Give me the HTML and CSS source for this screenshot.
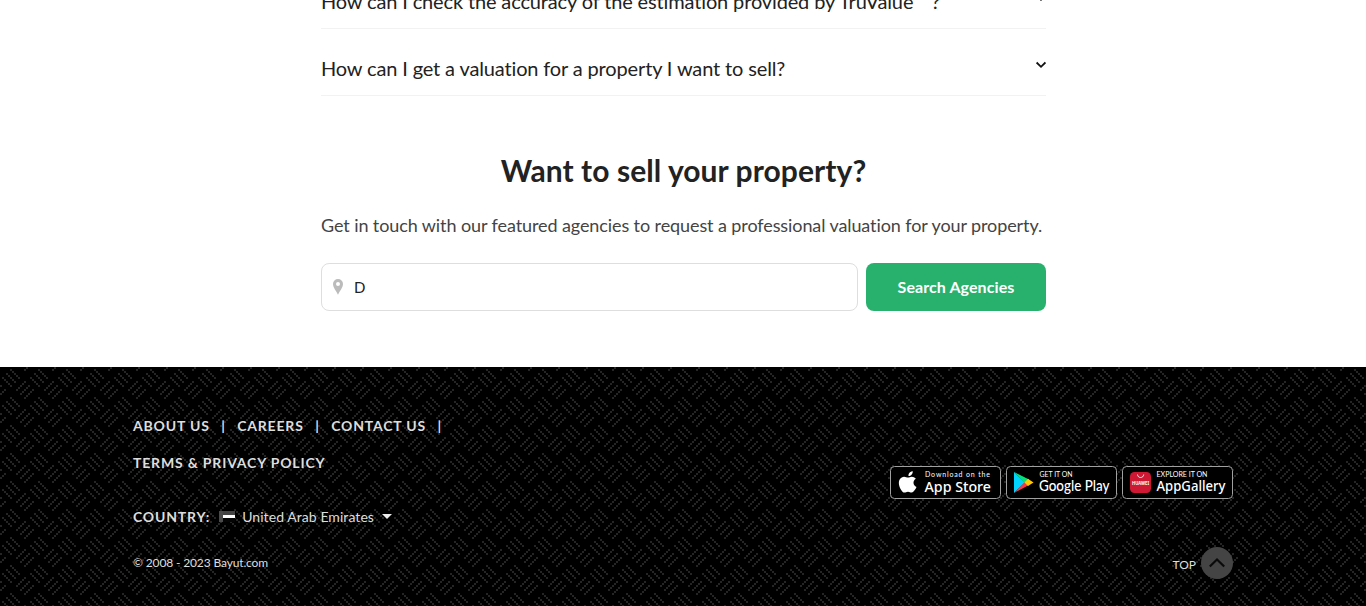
FILE: index.html
```html
<!DOCTYPE html>
<html lang="en">
<head>
<meta charset="utf-8">
<title>Bayut TruValue</title>
<link rel="stylesheet" href="styles.css">
</head>
<body>
<main class="content">
  <section class="faq">
    <div class="faq-row faq-first"><span class="faq-q">How can I check the accuracy of the estimation provided by TruValue<span class="tm">™</span>?</span>
      <svg class="chevron" viewBox="0 0 12 8"><path d="M1.600 1.500 6 5.800l4.400-4.300"/></svg></div>
    <div class="faq-row"><span class="faq-q">How can I get a valuation for a property I want to sell?</span>
      <svg class="chevron" viewBox="0 0 12 8"><path d="M1.600 1.500 6 5.800l4.400-4.300"/></svg></div>
  </section>
  <section class="sell">
    <h2 class="sell-title">Want to sell your property?</h2>
    <p class="sell-text">Get in touch with our featured agencies to request a professional valuation for your property.</p>
    <form class="search">
      <label class="field">
        <svg class="pin" viewBox="0 0 10 16"><path fill-rule="evenodd" d="M5 0a5 5 0 0 0-5 5c0 3.600 3.500 7.200 5 10.800C6.500 12.200 10 8.600 10 5a5 5 0 0 0-5-5zm0 3a2 2 0 1 1 0 4 2 2 0 0 1 0-4z"/></svg>
        <span class="value">D</span>
      </label>
      <button class="search-btn" type="button">Search Agencies</button>
    </form>
  </section>
</main>
<footer class="footer">
  <svg class="weave" aria-hidden="true">
    <defs><pattern id="weave" width="28" height="28" patternUnits="userSpaceOnUse">
      <g fill="#252525" shape-rendering="crispEdges">
        <path d="M6 6h2v2h-2zM8 8h2v2h-2zM10 10h2v2h-2zM12 12h2v2h-2zM14 14h2v2h-2z"/>
        <path d="M10 2h2v2h-2zM12 4h2v2h-2zM14 6h2v2h-2zM16 8h2v2h-2zM18 10h2v2h-2z"/>
        <path d="M2 10h2v2h-2zM4 12h2v2h-2zM6 14h2v2h-2zM8 16h2v2h-2zM10 18h2v2h-2z"/>
        <path d="M24 14h2v2h-2zM22 16h2v2h-2zM20 18h2v2h-2zM18 20h2v2h-2zM16 22h2v2h-2z"/>
        <path d="M0 18h2v2h-2zM26 20h2v2h-2zM24 22h2v2h-2zM22 24h2v2h-2zM20 26h2v2h-2z"/>
        <path d="M4 22h2v2h-2zM2 24h2v2h-2zM0 26h2v2h-2zM26 0h2v2h-2zM24 2h2v2h-2z"/>
      </g></pattern></defs>
    <rect width="100%" height="100%" fill="url(#weave)"/>
  </svg>
  <div class="footer-inner">
    <div class="footer-left">
      <nav class="links"><a>ABOUT US</a><i>|</i><a>CAREERS</a><i>|</i><a>CONTACT US</a><i>|</i></nav>
      <nav class="links links-second"><a>TERMS &amp; PRIVACY POLICY</a></nav>
      <div class="country"><b class="country-label">COUNTRY:</b>
        <svg class="flag" viewBox="0 0 16 11"><path fill="#444" d="M0 0h16v4H0z"/><path fill="#fff" d="M4 4h12v3H4z"/><path fill="#050505" d="M4 7h12v4H4z"/><path fill="#4a4a4a" d="M0 0h4v11H0z"/></svg>
        <span class="country-name">United Arab Emirates</span>
        <svg class="caret" viewBox="0 0 10 5"><path d="M0 0h10L5 5z"/></svg>
      </div>
      <div class="copyright">© 2008 - 2023 Bayut.com</div>
    </div>
    <div class="footer-right">
      <div class="badges">
        <svg class="badge" viewBox="0 0 111 33"><rect class="badge-box" x=".5" y=".5" width="110" height="32" rx="4"/>
          <path fill="#fff" d="M22.700 5.200c.2 1.400-.4 2.600-1.200 3.500-.8.900-1.900 1.400-3 1.300-.2-1.300.4-2.500 1.200-3.400.8-.8 2-1.400 3-1.400zM26.500 20.900c-.5 1.200-.8 1.700-1.400 2.700-.9 1.400-2.100 3-3.600 3-1.300 0-1.700-.8-3.500-.8s-2.200.8-3.500.8c-1.500 0-2.600-1.500-3.500-2.900-2.400-3.700-2.700-8.100-1.200-10.400 1.100-1.600 2.700-2.600 4.300-2.600s2.600.9 3.900.9c1.300 0 2.100-.9 3.900-.9 1.400 0 2.900.8 4 2.100-3.500 1.900-3 6.900.6 8.100z"/>
          <text class="badge-small" x="35" y="11.300" textLength="65">Download on the</text><text class="badge-large" x="34.500" y="26" textLength="66.500" lengthAdjust="spacingAndGlyphs">App Store</text></svg>
        <svg class="badge" viewBox="0 0 111 33"><rect class="badge-box" x=".5" y=".5" width="110" height="32" rx="4"/>
          <path fill="#00d2ff" d="M8 6v21l11-10.500z"/><path fill="#00e676" d="M8 6l15 7.500-4 3.500z"/><path fill="#ff3545" d="M8 27l15-8-4-3z"/><path fill="#ffc900" d="m22 12.800 5.500 3.700-5.500 3.500-3.500-3.500z"/>
          <text class="badge-small" x="33.500" y="11.200" textLength="33" lengthAdjust="spacingAndGlyphs">GET IT ON</text><text class="badge-large google-name" x="33" y="25" textLength="70.500" lengthAdjust="spacingAndGlyphs">Google Play</text></svg>
        <svg class="badge" viewBox="0 0 111 33"><rect class="badge-box" x=".5" y=".5" width="110" height="32" rx="4"/>
          <rect x="8" y="6" width="21" height="21" rx="4.500" fill="#cf1834"/><path d="M15.500 8.500c.2 4 6 4 6.200 0" fill="none" stroke="#fff" stroke-width=".9"/><text class="huawei" x="10" y="18.600" textLength="17" lengthAdjust="spacingAndGlyphs">HUAWEI</text>
          <text class="badge-small" x="34.500" y="11.300" textLength="51" lengthAdjust="spacingAndGlyphs">EXPLORE IT ON</text><text class="badge-large" x="34.500" y="25" textLength="69" lengthAdjust="spacingAndGlyphs">AppGallery</text></svg>
      </div>
      <div class="top"><span>TOP</span><svg class="top-icon" viewBox="0 0 32 32"><circle cx="16" cy="16" r="16" fill="#444"/><path d="m8.800 19.500 7.200-7 7.200 7" fill="none" stroke="#0a0a0a" stroke-width="2.200"/></svg></div>
    </div>
  </div>
</footer>
</body>
</html>
```
FILE: styles.css
```css
* { box-sizing: border-box; }
body { margin: 0; height: 606px; overflow: hidden; background: #fff; font-family: Lato, "Liberation Sans", sans-serif; font-variant-ligatures: none; color: #222; }
.content { width: 726px; height: 367px; margin: 0 auto; padding: 0 0 0 1px; overflow: hidden; }
.faq-row { height: 67px; border-bottom: 1px solid #f2f2f2; display: flex; justify-content: space-between; padding-top: 27px; }
.faq-first { margin-top: -38px; }
.faq-q { font-size: 20px; line-height: 24px; letter-spacing: -.14px; white-space: nowrap; }
.tm { display: inline-block; font-size: 24px; line-height: 20px; }
.chevron { width: 12px; height: 8px; margin: 5px -1px 0 0; flex: none; fill: none; stroke: #111; stroke-width: 1.800; }
.sell-title { margin: 55px 0 0; font-size: 30px; line-height: 38px; letter-spacing: .07px; text-align: center; font-weight: 700; }
.sell-text { margin: 24px 0 0; font-size: 18px; line-height: 24px; letter-spacing: -.094px; color: #444; white-space: nowrap; }
.search { display: flex; gap: 8px; margin-top: 26px; height: 48px; }
.field { width: 537px; border: 1px solid #dedede; border-radius: 8px; display: flex; align-items: center; padding-left: 11px; gap: 11px; }
.pin { width: 10px; height: 16px; fill: #bbb; }
.value { font-size: 15px; }
.search-btn { width: 180px; border: 0; border-radius: 8px; background: #28b16d; color: #fff; font: 700 16px Lato, sans-serif; letter-spacing: .08px; padding: 0 0 2px; }
.footer { position: relative; height: 239px; background: #000; color: #ddd; }
.weave { position: absolute; inset: 0; width: 100%; height: 100%; }
.footer-inner { position: relative; width: 1100px; margin: 0 auto; display: flex; justify-content: space-between; }
.footer-left { padding-top: 49px; }
.links { display: flex; font-size: 14px; font-weight: 700; line-height: 20px; letter-spacing: .82px; white-space: nowrap; }
.links i { font-style: normal; margin: 0 11.500px; }
.links-second { margin-top: 17px; }
.country { display: flex; align-items: center; margin-top: 33px; height: 20px; font-size: 14px; }
.country-label { letter-spacing: .82px; }
.country-name { letter-spacing: .07px; }
.flag { width: 16px; height: 11px; margin: 0 7px 0 9px; }
.caret { width: 10px; height: 5px; margin-left: 8px; fill: #eee; }
.copyright { margin-top: 28px; font-size: 12px; line-height: 18px; letter-spacing: -.14px; }
.footer-right { padding-top: 99px; display: flex; flex-direction: column; align-items: flex-end; }
.badges { display: flex; gap: 5px; }
.badge { width: 111px; height: 33px; }
.badge-box { fill: #000; stroke: #a0a0a0; stroke-width: 1; }
.badge-small { font: 7px Lato, sans-serif; fill: #fff; }
.badge-large { font: 500 15px "Noto Sans", sans-serif; fill: #fff; }
.google-name { font-family: Lato, sans-serif; }
.huawei { font: 700 4.500px "Noto Sans", sans-serif; fill: #fff; }
.top { display: flex; align-items: center; gap: 5px; margin-top: 48px; font-size: 12px; }
.top span { padding-top: 3px; }
.top-icon { width: 32px; height: 32px; }
```
